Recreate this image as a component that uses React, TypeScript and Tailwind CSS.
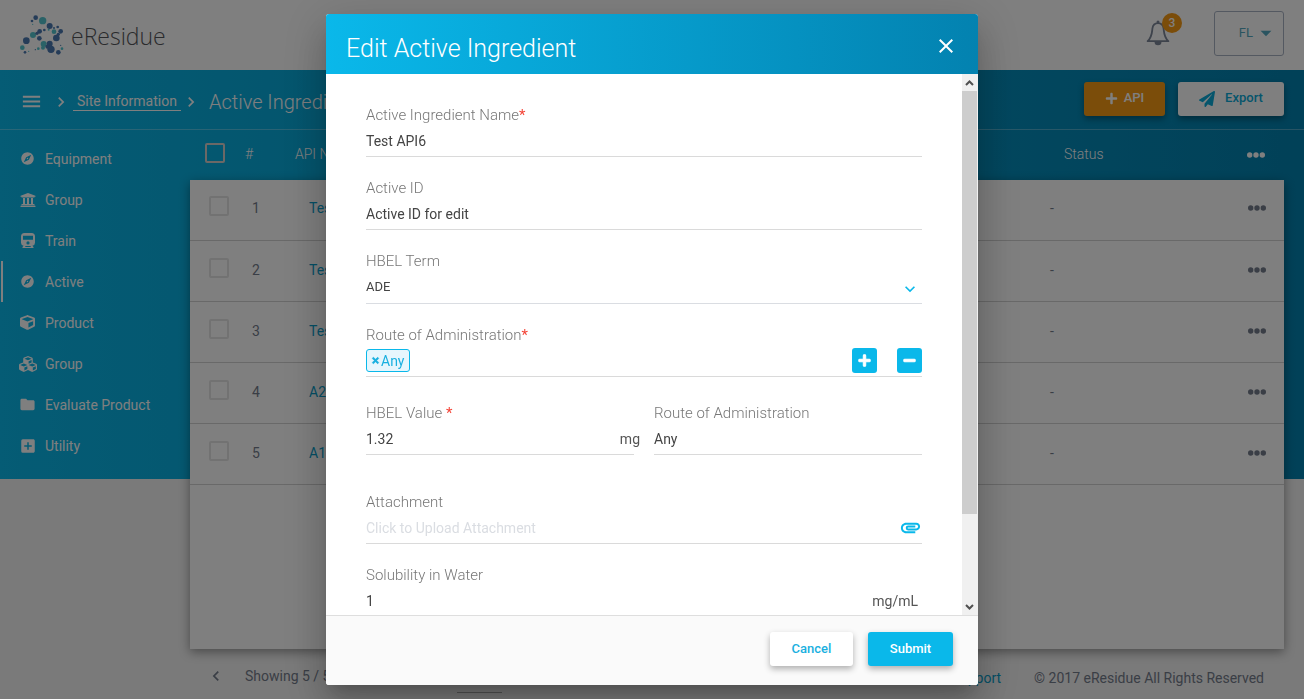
import type { ReactNode } from "react";
import {
  MdExplore,
  MdFolder,
  MdAddBox,
  MdMenu,
  MdKeyboardArrowRight,
  MdKeyboardArrowLeft,
  MdKeyboardArrowDown,
  MdArrowDropDown,
  MdAttachment,
  MdClose,
} from "react-icons/md";
import { FaUniversity, FaCube, FaCubes, FaPlus, FaMinus, FaPaperPlane, FaTimes } from "react-icons/fa";

const NAVY = "#4a78b0";
const TEAL = "#55c5cf";

const logoDots: [number, number, number, string][] = [
  [107, 52, 7, NAVY], [128, 61, 11, TEAL], [149, 77, 9, NAVY], [96, 62, 4, NAVY],
  [98, 72, 2, TEAL], [173, 80, 4, NAVY], [182, 93, 7, NAVY], [162, 94, 7, TEAL],
  [162, 83, 3, NAVY], [146, 88, 3, TEAL], [99, 104, 9, TEAL], [119, 93, 7, NAVY],
  [111, 99, 5, NAVY], [133, 89, 4, NAVY], [118, 114, 7, NAVY], [169, 113, 10, NAVY],
  [175, 102, 5, NAVY], [79, 121, 10, NAVY], [67, 142, 7, TEAL], [131, 131, 9, TEAL],
  [129, 142, 6, TEAL], [149, 130, 9, NAVY], [142, 139, 6, NAVY], [153, 147, 11, NAVY],
  [175, 156, 7, NAVY], [75, 156, 4, NAVY], [86, 153, 2, TEAL], [106, 148, 2, NAVY],
  [115, 145, 4, TEAL], [182, 135, 2, NAVY], [186, 145, 4, TEAL],
];

function Logo() {
  return (
    <a href="#home" className="flex items-center gap-1.5 text-[23px] leading-[30px] font-light text-[#55565a] font-['Open_Sans',sans-serif]">
      <svg width="45" height="41" viewBox="60 44 135 123" aria-hidden="true">
        {logoDots.map(([x, y, r, fill]) => (
          <circle key={`${x}-${y}`} cx={x} cy={y} r={r} fill={fill} />
        ))}
      </svg>
      <span className="pt-0.5">eResidue</span>
    </a>
  );
}

function Bell() {
  return (
    <svg width="24" height="26" viewBox="0 0 24 26" fill="none" stroke="#7c8698" aria-hidden="true">
      <circle cx="12" cy="1.9" r="1.5" fill="#7c8698" stroke="none" />
      <path d="M12 3.200c-3.400 0-5.200 2.200-5.600 5.400C5.900 13 6 17.500 1.600 21.200h20.800C18 17.500 18.100 13 17.600 8.600 17.200 5.400 15.400 3.200 12 3.200z" strokeWidth="1.800" strokeLinejoin="round" />
      <path d="M8.500 21.800a3.500 3.500 0 0 0 7 0z" fill="#7c8698" stroke="none" />
    </svg>
  );
}

function Train() {
  return (
    <svg width="14" height="15" viewBox="0 0 14 15" fill="currentColor" aria-hidden="true">
      <path
        fillRule="evenodd"
        d="M3.500 0h7A3.500 3.500 0 0 1 14 3.500v6.200a3 3 0 0 1-2.600 3L12.500 14v1h-11v-1l1.100-1.300a3 3 0 0 1-2.600-3V3.500A3.500 3.500 0 0 1 3.500 0zM2 2.800v4h10v-4zM7 8.300a1.600 1.600 0 1 0 0 3.200 1.600 1.600 0 0 0 0-3.200zM4.600 13.100l-.6.800h6l-.6-.8z"
      />
    </svg>
  );
}

function Dots() {
  return (
    <svg width="18" height="6" viewBox="0 0 18 6" fill="currentColor" aria-hidden="true">
      <circle cx="2.700" cy="3" r="2.700" />
      <circle cx="9" cy="3" r="2.700" />
      <circle cx="15.300" cy="3" r="2.700" />
    </svg>
  );
}

const nav: { label: string; icon: ReactNode; active?: boolean }[] = [
  { label: "Equipment", icon: <MdExplore size={15} /> },
  { label: "Group", icon: <FaUniversity size={16} /> },
  { label: "Train", icon: <Train /> },
  { label: "Active", icon: <MdExplore size={15} />, active: true },
  { label: "Product", icon: <FaCube size={15} /> },
  { label: "Group", icon: <FaCubes size={18} /> },
  { label: "Evaluate Product", icon: <MdFolder size={17} /> },
  { label: "Utility", icon: <MdAddBox size={18} /> },
];

const rows = ["Test API5", "Test API4", "Test API6", "A2", "A1"];

function Page() {
  return (
    <div className="flex min-h-screen flex-col bg-[#f4f4f4] text-sm text-[#747d8c]">
      <header className="flex h-[70px] items-center justify-between bg-white px-5">
        <Logo />
        <div className="flex items-center gap-8 pb-1">
          <button className="relative flex h-10 w-12 items-center justify-center" aria-label="Notifications">
            <Bell />
            <span className="absolute top-0 right-0 flex size-5 items-center justify-center rounded-full bg-[#f79a14] text-xs font-medium text-white">
              3
            </span>
          </button>
          <button className="flex h-[45px] w-[70px] items-center justify-end rounded-[3px] border border-[#a9b2c3] pr-1 text-[13px] text-[#55a9c0]">
            FL <MdArrowDropDown size={26} />
          </button>
        </div>
      </header>

      <main className="flex flex-1 flex-col bg-[linear-gradient(to_right,#0ab8ea,#0382b0)] bg-[length:100%_409px] bg-no-repeat">
        <div className="flex h-[60px] items-center justify-between border-b border-white/30 px-5 text-white">
          <nav className="flex items-center pt-1" aria-label="Breadcrumb">
            <button aria-label="Menu" className="mr-2">
              <MdMenu size={23} />
            </button>
            <MdKeyboardArrowRight size={20} />
            <a href="#site" className="ml-0.5 border-b border-white px-1 text-sm leading-[18px]">
              Site Information
            </a>
            <MdKeyboardArrowRight size={20} />
            <h1 className="ml-2 text-xl font-light">Active Ingredient</h1>
          </nav>
          <div className="flex gap-[13px] pb-0.5 text-[13px] font-medium">
            <button className="flex h-[34px] w-[81px] items-center justify-center gap-1.5 rounded-[3px] bg-[#f79a14] shadow-[0_3px_6px_rgba(0,0,0,0.35)]">
              <FaPlus size={13} /> API
            </button>
            <button className="flex h-[34px] w-[106px] items-center justify-center gap-2.5 rounded-[3px] bg-white text-[#0aaad8] shadow-[0_3px_6px_rgba(0,0,0,0.35)]">
              <FaPaperPlane size={16} /> Export
            </button>
          </div>
        </div>

        <div className="flex flex-1 pr-5">
          <aside className="w-[190px] shrink-0 pt-2">
            <ul>
              {nav.map((item, i) => (
                <li key={i}>
                  <a
                    href="#nav"
                    className={`ml-px flex h-[41px] items-center gap-2 border-l-2 pl-[15px] text-sm text-white ${item.active ? "border-white" : "border-transparent"}`}
                  >
                    <span className="flex w-[19px] justify-center">{item.icon}</span>
                    {item.label}
                  </a>
                </li>
              ))}
            </ul>
          </aside>

          <section className="grid min-w-0 flex-1">
            <div className="col-start-1 row-start-1 mt-[50px] bg-white shadow-[0_3px_10px_rgba(0,0,0,0.4)]" />
            <table className="z-0 col-start-1 row-start-1 w-full table-fixed self-start text-left">
              <colgroup>
                <col className="w-[55px]" />
                <col className="w-[50px]" />
                <col />
                <col className="w-[174px]" />
                <col className="w-[60px]" />
              </colgroup>
              <thead>
                <tr className="h-[49px] text-sm text-white">
                  <th className="pl-[15px]">
                    <input type="checkbox" aria-label="Select all" className="mb-1 block size-5 appearance-none rounded-[2px] border-2 border-[#d8d0cc]" />
                  </th>
                  <th className="pb-0.5 font-light">#</th>
                  <th className="pb-0.5 font-light">API Name</th>
                  <th className="pb-0.5 pl-[14px] font-light">Status</th>
                  <th className="pr-[19px]">
                    <button className="ml-auto block" aria-label="Columns"><Dots /></button>
                  </th>
                </tr>
              </thead>
              <tbody>
                {rows.map((name, i) => (
                  <tr key={name} className="h-[61px] border-b border-[#d2d2d2]">
                    <td className="pl-[19px]">
                      <input type="checkbox" aria-label={`Select ${name}`} className="mb-1.5 block size-5 appearance-none rounded-[2px] border-2 border-[#e4e4e4]" />
                    </td>
                    <td className="pb-0.5 pl-[7px]">{i + 1}</td>
                    <td className="pb-0.5 pl-[14px] text-[#0aa0cc]"><a href="#api">{name}</a></td>
                    <td className="pb-0.5">-</td>
                    <td className="pr-[18px] pb-0.5">
                      <button className="ml-auto block" aria-label="Actions"><Dots /></button>
                    </td>
                  </tr>
                ))}
              </tbody>
            </table>
          </section>
        </div>
      </main>

      <footer className="flex h-[50px] items-center justify-between pt-1 pr-10 pl-[206px] text-sm">
        <div className="flex items-center gap-[19px]">
          <button aria-label="Previous page"><MdKeyboardArrowLeft size={20} /></button>
          <span>Showing 5 / 5</span>
          <input aria-label="Page size" className="mt-1.5 ml-[108px] h-7 w-[45px] border-b border-[#a8a8a8]" />
        </div>
        <div className="mt-1 flex gap-[33px]">
          <a href="#support" className="text-[#0aa0cc]">Support</a>
          <span>© 2017 eResidue All Rights Reserved</span>
        </div>
      </footer>
    </div>
  );
}

function Field({ id, label, required, className = "", children }: {
  id: string;
  label: string;
  required?: ReactNode;
  className?: string;
  children: ReactNode;
}) {
  return (
    <div className={`min-w-0 ${className}`}>
      <label htmlFor={id} className="block h-5 text-[15px] leading-5 font-light text-[#777]">
        {label}
        {required && <span className="font-normal text-[#f44336]">{required}</span>}
      </label>
      {children}
    </div>
  );
}

const line = "flex h-8 items-center border-b border-[#dadada]";
const box = "min-w-0 flex-1 bg-transparent text-sm text-[#444] outline-none placeholder:text-[#dadde2]";

function EditDialog() {
  return (
    <div className="fixed inset-0 z-10 flex justify-center bg-black/50 py-3.5">
      <div
        role="dialog"
        aria-labelledby="dialog-title"
        className="flex h-full w-full max-w-[652px] flex-col overflow-hidden rounded-[3px] bg-white shadow-[0_24px_38px_3px_rgba(0,0,0,0.14),0_9px_46px_8px_rgba(0,0,0,0.12),0_11px_15px_-7px_rgba(0,0,0,0.2)]"
      >
        <div className="flex h-[60px] shrink-0 items-center justify-between bg-[linear-gradient(to_right,#0ab8ea,#0382b0)] px-5 text-white">
          <h2 id="dialog-title" className="mt-2.5 text-[25px] leading-8 font-light">
            Edit Active Ingredient
          </h2>
          <button aria-label="Close" className="mt-1"><MdClose size={24} /></button>
        </div>

        <div className="flex min-h-0 flex-1">
          <form className="flex min-w-0 flex-1 flex-col gap-[21px] overflow-y-auto px-10 pt-[31px] [scrollbar-width:none]">
            <Field id="name" label="Active Ingredient Name" required="*">
              <div className={line}>
                <input id="name" defaultValue="Test API6" className={box} />
              </div>
            </Field>
            <Field id="active-id" label="Active ID">
              <div className={line}>
                <input id="active-id" defaultValue="Active ID for edit" className={box} />
              </div>
            </Field>
            <Field id="term" label="HBEL Term">
              <div className="relative">
                <select id="term" className="block h-[33px] w-full appearance-none border-b border-[#dadde2] text-[13px] text-[#444] outline-none">
                  <option>ADE</option>
                </select>
                <MdKeyboardArrowDown size={20} className="pointer-events-none absolute top-2 right-0.5 text-[#0ab8ea]" />
              </div>
            </Field>
            <Field id="route" label="Route of Administration" required="*" className="mb-[5px]">
              <div className={line}>
                <button type="button" id="route" className="flex h-[23px] items-center rounded-[3px] border border-[#0ab8ea] bg-[#e6f6fd] px-1 text-sm text-[#1ab0e0]">
                  <FaTimes size={9} stroke="currentColor" strokeWidth={40} className="mr-px" />Any
                </button>
                <div className="ml-auto flex gap-5 text-white">
                  <button type="button" aria-label="Add route" className="flex size-[25px] items-center justify-center rounded-[3px] bg-[#0ab8ea]">
                    <FaPlus size={13} stroke="currentColor" strokeWidth={40} />
                  </button>
                  <button type="button" aria-label="Remove route" className="flex size-[25px] items-center justify-center rounded-[3px] bg-[#0ab8ea]">
                    <FaMinus size={13} stroke="currentColor" strokeWidth={40} />
                  </button>
                </div>
              </div>
            </Field>
            <div className="mb-4 grid grid-cols-2 gap-5">
              <Field id="value" label="HBEL Value" required=" *">
                <div className={line}>
                  <input id="value" defaultValue="1.32" className={box} />
                  <span className="-mr-1.5 text-sm text-[#555]">mg</span>
                </div>
              </Field>
              <Field id="value-route" label="Route of Administration">
                <div className={line}>
                  <input id="value-route" defaultValue="Any" className={box} />
                </div>
              </Field>
            </div>
            <Field id="attachment" label="Attachment">
              <div className={line}>
                <input id="attachment" placeholder="Click to Upload Attachment" className={box} />
                <MdAttachment size={23} className="text-[#0ab8ea]" />
              </div>
            </Field>
            <Field id="solubility" label="Solubility in Water">
              <div className={line}>
                <input id="solubility" defaultValue="1" className={box} />
                <span className="pr-1 text-sm text-[#555]">mg/mL</span>
              </div>
            </Field>
          </form>

          <div className="flex w-4 flex-col bg-[#f0f0f0] text-[#505050]" aria-hidden="true">
            <svg width="15" height="17" viewBox="0 0 15 17" fill="none" stroke="currentColor" strokeWidth="2">
              <path d="M4 11l3.500-3.500L11 11" />
            </svg>
            <div className="mr-px flex-[423] bg-[#cdcdcd]" />
            <div className="flex-[84]" />
            <svg width="15" height="17" viewBox="0 0 15 17" fill="none" stroke="currentColor" strokeWidth="2">
              <path d="M4 7l3.500 3.500L11 7" />
            </svg>
          </div>
        </div>

        <div className="flex h-[70px] shrink-0 items-center justify-end gap-[15px] border-t border-[#dedede] bg-[#fafafa] pr-[25px] pb-1 text-[13px] font-medium">
          <button className="h-[34px] w-[83px] rounded-[3px] bg-white text-[#1ab0e0] shadow-[0_3px_6px_rgba(0,0,0,0.3)]">Cancel</button>
          <button className="h-[34px] w-[85px] rounded-[3px] bg-[#0ab8ea] text-white shadow-[0_3px_6px_rgba(0,0,0,0.3)]">Submit</button>
        </div>
      </div>
    </div>
  );
}

export default function App() {
  return (
    <div className="font-[Roboto,sans-serif]">
      <Page />
      <EditDialog />
    </div>
  );
}
